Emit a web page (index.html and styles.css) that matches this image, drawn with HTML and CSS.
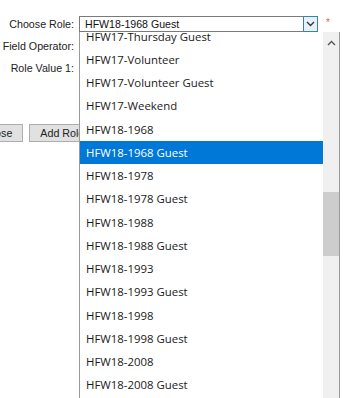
FILE: index.html
```html
<!DOCTYPE html>
<html lang="en">
<head>
  <meta charset="UTF-8">
  <title>Role Assignment</title>
  <link rel="stylesheet" href="styles.css">
</head>
<body>
  <form class="role-form">
    <div class="field-row">
      <label class="field-label">Choose Role:</label>
      <div class="select-box">
        <span class="select-value">HFW18-1968 Guest</span>
        <span class="select-arrow">
          <svg width="9" height="6" viewBox="0 0 9 6"><path d="M1 1 L4.5 4.5 L8 1" fill="none" stroke="#333" stroke-width="1.3"/></svg>
        </span>
      </div>
      <span class="required">*</span>
    </div>
    <div class="field-row">
      <label class="field-label">Field Operator:</label>
    </div>
    <div class="field-row">
      <label class="field-label">Role Value 1:</label>
    </div>

    <div class="button-row">
      <button type="button" class="btn btn-close">Close</button>
      <button type="button" class="btn">Add Role</button>
    </div>
  </form>

  <!-- open dropdown list of the role select -->
  <div class="dropdown">
    <ul class="options">
      <li>HFW17-Thursday Guest</li>
      <li>HFW17-Volunteer</li>
      <li>HFW17-Volunteer Guest</li>
      <li>HFW17-Weekend</li>
      <li>HFW18-1968</li>
      <li class="selected">HFW18-1968 Guest</li>
      <li>HFW18-1978</li>
      <li>HFW18-1978 Guest</li>
      <li>HFW18-1988</li>
      <li>HFW18-1988 Guest</li>
      <li>HFW18-1993</li>
      <li>HFW18-1993 Guest</li>
      <li>HFW18-1998</li>
      <li>HFW18-1998 Guest</li>
      <li>HFW18-2008</li>
      <li>HFW18-2008 Guest</li>
      <li>HFW18-2018</li>
    </ul>
    <div class="scrollbar">
      <span class="scroll-up">
        <svg width="9" height="6" viewBox="0 0 9 6"><path d="M1 5 L4.5 1.5 L8 5" fill="none" stroke="#555" stroke-width="1.4"/></svg>
      </span>
      <div class="scroll-thumb"></div>
    </div>
  </div>
</body>
</html>
```

FILE: styles.css
```css
* {
  margin: 0;
  padding: 0;
  box-sizing: border-box;
}

body {
  width: 343px;
  height: 398px;
  overflow: hidden;
  background: #fff;
  font-family: "Liberation Sans", Arial, sans-serif;
  color: #222;
  position: relative;
}

.role-form {
  padding-top: 12.5px;
}

.field-row {
  display: flex;
  align-items: center;
  height: 22px;
}

.field-label {
  width: 74px;
  text-align: right;
  font-size: 10.7px;
  color: #222;
  margin-right: 5px;
  white-space: nowrap;
}

.select-box {
  width: 239px;
  height: 16px;
  border: 1px solid #7a7a7a;
  border-right: none;
  display: flex;
  align-items: stretch;
  background: #fff;
}

.select-value {
  flex: 1;
  font-size: 10.6px;
  line-height: 15px;
  padding-left: 5px;
  color: #111;
}

.select-arrow {
  width: 15px;
  margin-top: -1px;
  height: 16px;
  border: 1px solid #3c7fb1;
  background: #e5f1fb;
  display: flex;
  align-items: center;
  justify-content: center;
}

.required {
  color: #e06060;
  font-size: 10px;
  margin-left: 8px;
  align-self: flex-start;
  margin-top: 4px;
}

.button-row {
  display: flex;
  gap: 6px;
  margin-top: 45px;
}

.btn {
  height: 18px;
  padding: 0 10px;
  font-family: "Liberation Sans", Arial, sans-serif;
  font-size: 10.7px;
  color: #222;
  background: #e1e1e1;
  border: 1px solid #adadad;
}

.btn-close {
  margin-left: -26px;
}

.dropdown {
  position: absolute;
  left: 79px;
  top: 32px;
  width: 261px;
  height: 380px;
  background: #fff;
  border: 1px solid #9a9a9a;
  border-top: none;
  display: flex;
}

.options {
  flex: 1;
  list-style: none;
  overflow: hidden;
  font-family: "Open Sans", "Noto Sans", sans-serif;
  font-size: 11.4px;
  color: #1a1a1a;
}

.options li {
  height: 23.25px;
  line-height: 24px;
  padding-left: 6px;
  white-space: nowrap;
}

.options li:first-child {
  margin-top: -7.3px;
}

.options li.selected {
  background: #0078d7;
  color: #fff;
}

.scrollbar {
  width: 16px;
  background: #f0f0f0;
  display: flex;
  flex-direction: column;
  align-items: center;
}

.scroll-up {
  height: 20px;
  display: flex;
  align-items: center;
  justify-content: center;
  margin-top: 1px;
}

.scroll-thumb {
  width: 16px;
  height: 64px;
  margin-top: 139px;
  background: #cdcdcd;
}
```
